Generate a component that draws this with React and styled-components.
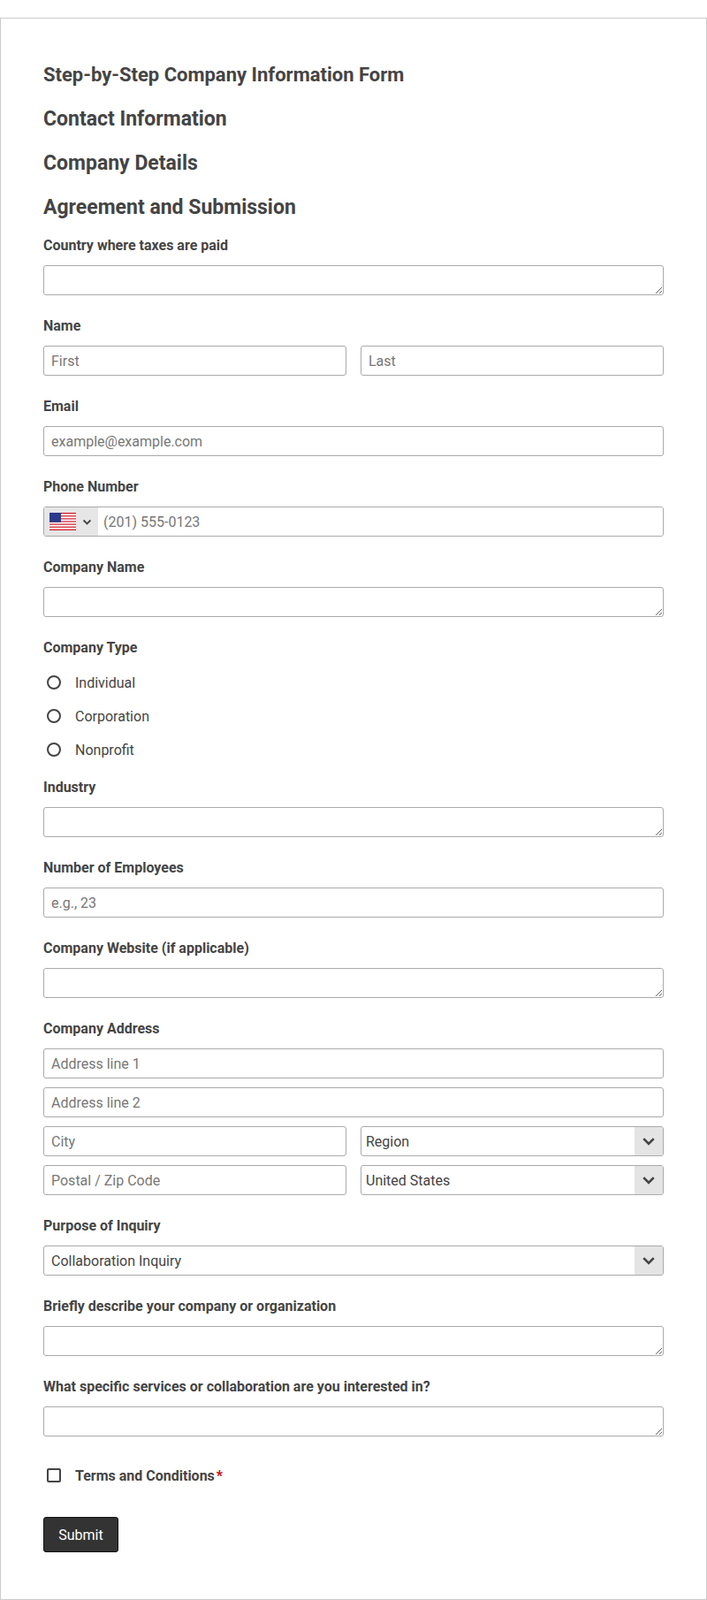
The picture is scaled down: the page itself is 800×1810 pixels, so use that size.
import React from 'react'
import styled, { createGlobalStyle } from 'styled-components'

const Global = createGlobalStyle`
  body { margin: 0; background: #fff; font-family: Roboto, "Liberation Sans", sans-serif; color: #444; }
  * { box-sizing: border-box; }
`

const Card = styled.div`
  margin-top: 20px;
  border: 1px solid #ccc;
  min-height: 1790px;
  padding: 49px 48px 40px 48px;
`

const Heading = styled.h1`
  margin: 0 0 20px;
  font-size: ${p => (p.small ? '22px' : '23px')};
  line-height: 30px;
  font-weight: 700;
  color: #444;
  &:last-of-type { margin-bottom: 18px; }
`

const Field = styled.div`
  margin-bottom: 25px;
`

const Label = styled.div`
  font-size: 16px;
  line-height: 20px;
  font-weight: 700;
  color: #444;
  margin-bottom: ${p => p.gap || 12}px;
`

const Input = styled.input`
  display: block;
  width: 100%;
  height: 34px;
  border: 1px solid #aaa;
  border-radius: 3px;
  padding: 0 8px;
  font: 16px Roboto, sans-serif;
  color: #444;
  &::placeholder { color: #777; }
`

const Area = styled.textarea`
  display: block;
  width: 100%;
  height: 34px;
  border: 1px solid #aaa;
  border-radius: 3px;
  font: 16px Roboto, sans-serif;
  resize: vertical;
`

const Row = styled.div`
  display: grid;
  grid-template-columns: 1fr 1fr;
  gap: 16px;
`

const Stack = styled.div`
  display: flex;
  flex-direction: column;
  gap: 10px;
`

const SelectBox = styled.div`
  display: flex;
  height: 34px;
  border: 1px solid #aaa;
  border-radius: 3px;
  overflow: hidden;
  font-size: 16px;
  color: #444;
`

const SelectText = styled.div`
  flex: 1;
  display: flex;
  align-items: center;
  padding: 0 ${p => (p.tight ? 5 : 8)}px;
`

const Arrow = styled.div`
  width: 32px;
  background: #e4e4e4;
  display: flex;
  align-items: center;
  justify-content: center;
`

const PhoneBox = styled.div`
  display: flex;
  height: 34px;
  border: 1px solid #aaa;
  border-radius: 3px;
  overflow: hidden;
`

const FlagPart = styled.div`
  width: 61px;
  background: #e6e6e6;
  display: flex;
  align-items: center;
  padding-left: 6px;
  gap: 7px;
`

const PhoneInput = styled.input`
  flex: 1;
  border: none;
  padding: 0 6px;
  font: 16px Roboto, sans-serif;
  &::placeholder { color: #777; }
`

const Option = styled.label`
  display: flex;
  align-items: center;
  height: 38px;
  font-size: 16px;
  color: #444;
`

const Radio = styled.span`
  width: 16px;
  height: 16px;
  border: 2px solid #444;
  border-radius: ${p => (p.square ? '2px' : '50%')};
  margin: 0 16px 0 4px;
`

const Options = styled.div`
  margin: -1px 0 14px;
`

const Terms = styled.div`
  display: flex;
  align-items: center;
  height: 38px;
  margin: 18px 0 28px;
  font-size: 16px;
  font-weight: 700;
`

const Star = styled.span`
  color: #c00;
  margin-left: 2px;
`

const Submit = styled.button`
  width: 85px;
  height: 40px;
  background: #333;
  color: #fff;
  border: 1px solid #111;
  border-radius: 3px;
  font: 16px Roboto, sans-serif;
`

const Chevron = ({ size = 14 }) => (
  <svg width={size} height={size} viewBox="0 0 14 14">
    <path d="M2 4.5 L7 9.5 L12 4.5" fill="none" stroke="#444" strokeWidth="2.4" />
  </svg>
)

const Flag = () => (
  <svg width="30" height="20" viewBox="0 0 30 20">
    {Array.from({ length: 7 }).map((_, i) => (
      <rect key={i} x="0" y={i * 20 / 6.5} width="30" height={20 / 13} fill="#d21f2b" />
    ))}
    {Array.from({ length: 6 }).map((_, i) => (
      <rect key={'w' + i} x="0" y={i * 20 / 6.5 + 20 / 13} width="30" height={20 / 13} fill="#fff" />
    ))}
    <rect x="0" y="0" width="13" height="10.8" fill="#2a3a8c" />
  </svg>
)

const Select = ({ value }) => (
  <SelectBox>
    <SelectText tight>{value}</SelectText>
    <Arrow><Chevron size={16} /></Arrow>
  </SelectBox>
)

export default function App() {
  return (
    <>
      <Global />
      <Card>
        <Heading small>Step-by-Step Company Information Form</Heading>
        <Heading>Contact Information</Heading>
        <Heading>Company Details</Heading>
        <Heading>Agreement and Submission</Heading>

        <Field>
          <Label>Country where taxes are paid</Label>
          <Area />
        </Field>
        <Field>
          <Label>Name</Label>
          <Row>
            <Input placeholder="First" />
            <Input placeholder="Last" />
          </Row>
        </Field>
        <Field>
          <Label>Email</Label>
          <Input placeholder="example@example.com" />
        </Field>
        <Field>
          <Label>Phone Number</Label>
          <PhoneBox>
            <FlagPart><Flag /><Chevron size={11} /></FlagPart>
            <PhoneInput placeholder="(201) 555-0123" />
          </PhoneBox>
        </Field>
        <Field>
          <Label>Company Name</Label>
          <Area />
        </Field>
        <Label gap={11}>Company Type</Label>
        <Options>
          {['Individual', 'Corporation', 'Nonprofit'].map(o => (
            <Option key={o}><Radio />{o}</Option>
          ))}
        </Options>
        <Field>
          <Label>Industry</Label>
          <Area />
        </Field>
        <Field>
          <Label>Number of Employees</Label>
          <Input placeholder="e.g., 23" />
        </Field>
        <Field>
          <Label>Company Website (if applicable)</Label>
          <Area />
        </Field>
        <Field>
          <Label>Company Address</Label>
          <Stack>
            <Input placeholder="Address line 1" />
            <Input placeholder="Address line 2" />
            <Row>
              <Input placeholder="City" />
              <Select value="Region" />
            </Row>
            <Row>
              <Input placeholder="Postal / Zip Code" />
              <Select value="United States" />
            </Row>
          </Stack>
        </Field>
        <Field>
          <Label>Purpose of Inquiry</Label>
          <SelectBox>
            <SelectText>Collaboration Inquiry</SelectText>
            <Arrow><Chevron size={16} /></Arrow>
          </SelectBox>
        </Field>
        <Field>
          <Label>Briefly describe your company or organization</Label>
          <Area />
        </Field>
        <Field>
          <Label>What specific services or collaboration are you interested in?</Label>
          <Area />
        </Field>
        <Terms><Radio square />Terms and Conditions<Star>*</Star></Terms>
        <Submit>Submit</Submit>
      </Card>
    </>
  )
}
